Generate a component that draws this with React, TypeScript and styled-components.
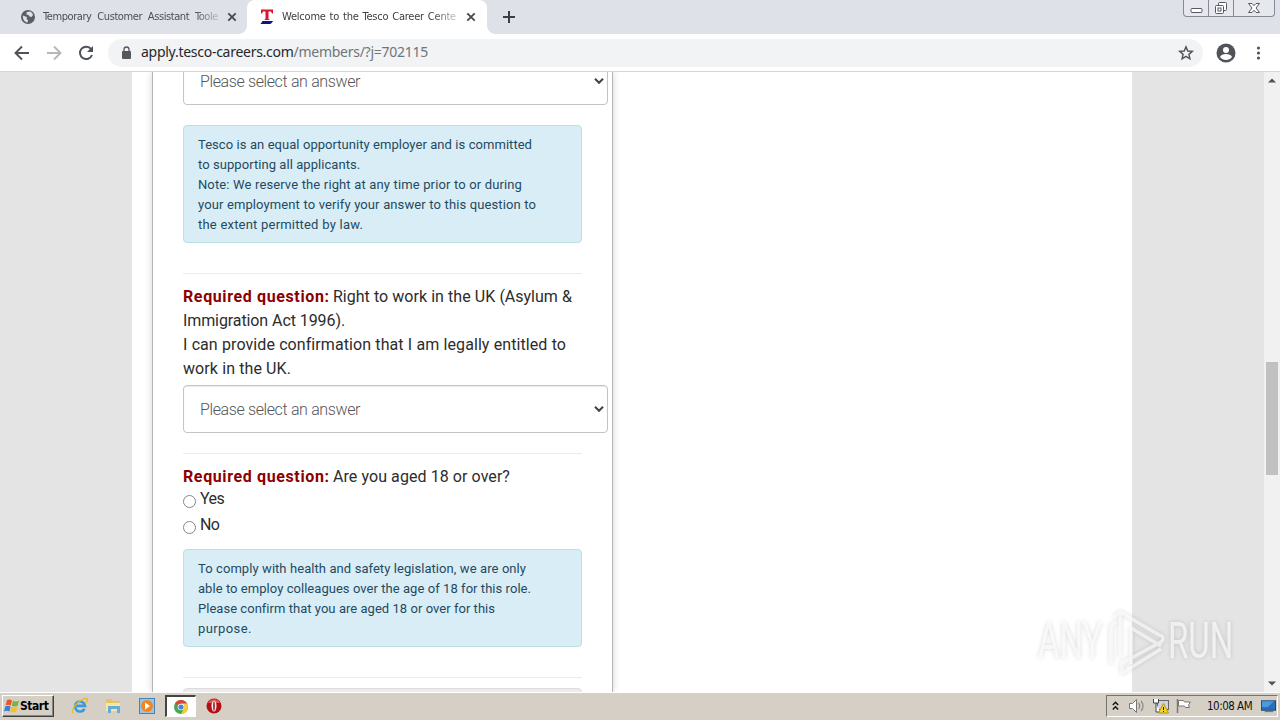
import React from "react";
import styled, { createGlobalStyle } from "styled-components";

const Global = createGlobalStyle`
  *{box-sizing:border-box}
  body{margin:0;background:#fff;overflow:hidden}
`;

const Screen = styled.div`
  width:1280px;height:720px;display:flex;flex-direction:column;overflow:hidden;position:relative;
  font-family:Roboto,"Liberation Sans",sans-serif;
`;

/* Text fitted to a fixed measure, spreading the word gaps */
const Line = styled.span<{ $w: number; $ls?: number }>`
  display:block;width:${p => p.$w}px;white-space:nowrap;text-align:justify;text-align-last:justify;
  letter-spacing:${p => p.$ls ?? 0}px;
`;

/* ---------- browser chrome ---------- */
const TabStrip = styled.header`
  flex:none;height:34px;background:#dee1e8;display:flex;
`;
const Tab = styled.div<{ $active?: boolean; $w: number; $pad: number }>`
  width:${p => p.$w}px;height:34px;display:flex;align-items:center;padding-left:${p => p.$pad}px;
  background:${p => (p.$active ? "#fff" : "transparent")};
  border-radius:8px 8px 0 0;color:${p => (p.$active ? "#3c4043" : "#4b4e53")};
  & > svg{flex:none}
`;
const TabTitle = styled.div<{ $gap: number }>`
  margin:0 8px 0 ${p => p.$gap}px;width:176px;height:20px;flex:none;
  font:11px/20px "DejaVu Sans Condensed","DejaVu Sans",sans-serif;
  mask-image:linear-gradient(90deg,#000 86%,rgba(0,0,0,.2));
`;
const Flare = styled.div<{ $side: "left" | "right" }>`
  width:8px;height:8px;align-self:flex-end;margin-${p => p.$side}:-8px;
  background:radial-gradient(circle at ${p => (p.$side === "left" ? "0" : "100%")} 0,transparent 7.5px,#fff 8px);
`;
const FlareLeft = styled(Flare)`margin-left:-8px;`;
const FlareRight = styled(Flare)`margin-right:0;`;
const NewTab = styled.div`margin-left:8px;height:34px;display:flex;align-items:center;`;
const WindowButtons = styled.div`
  margin:0 5px 0 auto;width:92px;height:17px;display:flex;border:1px solid #868a94;border-top:0;
  border-radius:0 0 4px 4px;background:#e6e8ee;
`;
const WinButton = styled.div<{ $w: number }>`
  width:${p => p.$w}px;display:flex;justify-content:center;border-right:1px solid #868a94;
  &:last-child{border:0}
`;
const Toolbar = styled.div`
  flex:none;height:38px;border-bottom:1px solid #d5d6d8;background:#fff;display:flex;align-items:center;
  padding:0 14px;
  & > svg{flex:none}
`;
const Address = styled.div`
  flex:none;width:1095px;height:28px;border-radius:14px;background:#f1f3f4;display:flex;align-items:center;
  margin:0 13px 0 14px;padding:0 8px 0 13px;
`;
const Url = styled.div`
  margin-left:9px;flex:1;font:14px/20px "Noto Sans",sans-serif;color:#70757a;letter-spacing:-.27px;padding-bottom:2px;
  b{font-weight:400;color:#26282c}
`;

/* ---------- page ---------- */
const Viewport = styled.main`flex:none;height:620px;display:flex;background:#e4e4e4;overflow:hidden;`;
const Page = styled.div`margin-left:132px;width:1000px;background:#fff;padding-left:20px;`;
const Panel = styled.section`
  width:461px;height:620px;border:solid #b4b4b4;border-width:0 1px;padding:0 30px;
  box-shadow:0 0 7px rgba(0,0,0,.18);background:#fff;overflow:hidden;
`;
const Select = styled.div<{ $top: number }>`
  width:425px;height:48px;margin-top:${p => p.$top}px;border:1px solid #c4c4c4;border-radius:4px;
  display:flex;align-items:center;justify-content:space-between;padding:0 2px 0 16px;
  box-shadow:inset 0 1px 1px rgba(0,0,0,.08);color:#555;font-size:16px;font-weight:300;
`;
const Notice = styled.div<{ $top: number }>`
  width:399px;margin-top:${p => p.$top}px;padding:9px 14px 7px;border:1px solid #bce0e4;border-radius:4px;
  background:#d9edf7;color:#1f4a60;font-size:13px;line-height:20px;
`;
const Rule = styled.hr<{ $top: number }>`
  width:399px;height:1px;border:0;background:#ececec;margin:${p => p.$top}px 0 0;
`;
const Question = styled.div`
  padding-top:11px;font-size:16px;line-height:24px;color:#2c2c2c;
`;
const QuestionRow = styled.div`display:flex;gap:4px;`;
const Required = styled.strong`
  width:146px;white-space:nowrap;color:#8b0000;font-weight:700;text-align-last:justify;letter-spacing:.62px;
`;
const Option = styled.label<{ $h: number }>`
  height:${p => p.$h}px;display:flex;gap:4px;font-size:16px;line-height:20px;color:#2c2c2c;letter-spacing:-.6px;
`;
const Radio = styled.i`
  width:13px;height:13px;border:1px solid #858585;border-radius:50%;background:#fff;margin-top:6px;
`;
const NextField = styled.div`margin-top:10px;width:399px;height:20px;background:#ececec;border:1px solid #ddd;border-radius:4px;`;

const Scrollbar = styled.div`
  width:16px;margin-left:auto;background:#f1f1f1;display:flex;flex-direction:column;align-items:center;
`;
const Arrow = styled.div<{ $down?: boolean }>`
  height:17px;display:flex;align-items:center;transform:${p => (p.$down ? "rotate(180deg)" : "none")};
`;
const Thumb = styled.div`width:12px;height:113px;margin:273px 0 200px;background:#c1c1c1;`;

/* ---------- taskbar ---------- */
const Taskbar = styled.footer`
  flex:none;height:28px;background:#d6cfc5;box-shadow:inset 0 1px #fff;
  display:flex;align-items:center;padding:3px 2px;
`;
const Start = styled.div`
  width:52px;height:22px;display:flex;align-items:center;padding-left:1px;background:#d6cfc5;
  border:1px solid;border-color:#fff #404040 #404040 #fff;box-shadow:inset -1px -1px #8a867e;
  font:bold 12px "DejaVu Sans Condensed",sans-serif;letter-spacing:-.45px;color:#000;
`;
const Launch = styled.div<{ $ml: number; $on?: boolean }>`
  width:${p => (p.$on ? 31 : 18)}px;height:22px;margin-left:${p => p.$ml}px;display:flex;align-items:center;justify-content:center;
  background:${p => (p.$on ? "#fff" : "none")};
  border:${p => (p.$on ? "solid" : "none")};border-width:2px 1px 1px 2px;border-color:#444 #fff #fff #444;
`;
const Tray = styled.div`
  margin-left:auto;width:172px;height:22px;display:flex;align-items:center;
  border:1px solid;border-color:#77736b #fff #fff #77736b;padding-left:5px;
  & > svg{flex:none}
`;
const Clock = styled.div`
  width:46px;margin:0 8px 0 14px;font:11.5px "DejaVu Sans Condensed",sans-serif;letter-spacing:-.5px;white-space:nowrap;color:#111;
`;
const Watermark = styled.svg`
  position:absolute;left:1030px;top:604px;filter:drop-shadow(0 0 2px rgba(0,0,0,.22));
`;

const Cross = () => (
  <svg width="10" height="10" viewBox="0 0 10 10"><path d="M1.300 1.300l7.400 7.400M8.700 1.300L1.300 8.700" stroke="#45484c" strokeWidth="1.800" /></svg>
);
const Chevron = () => (
  <svg width="12" height="8" viewBox="0 0 12 8"><path d="M2 1.8l4 4 4-4" fill="none" stroke="#444" strokeWidth="2" /></svg>
);
const Triangle = () => (
  <svg width="8" height="5" viewBox="0 0 8 5"><path d="M0 4.5L4 .5l4 4z" fill="#505050" /></svg>
);

export default function App() {
  return (
    <Screen>
      <Global />
      <TabStrip>
        <Tab $w={247} $pad={21}>
          <svg width="14" height="14" viewBox="0 0 14 14">
            <circle cx="7" cy="7" r="7" fill="#5b5f64" />
            <path d="M2 5.5c1.5.5 2.5 1.200 4 1.500l-.5 2 1.500 1 -.5 2.400C3.500 12 1.500 9.500 2 5.500zM6 2l3-.4c1.500.6 2.600 1.800 3 3.400l-1.500 2-2-.5-1-1.500-2-.5L5.500 3z" fill="#dee1e8" />
          </svg>
          <TabTitle $gap={8}><Line $w={175} $ls={-0.42}>Temporary Customer Assistant Toole</Line></TabTitle>
          <Cross />
        </Tab>
        <FlareLeft $side="left" />
        <Tab $active $w={240} $pad={12}>
          <svg width="16" height="16" viewBox="0 0 16 16">
            <path d="M2 .5h12v4h-1l-1-2H9.500V10l1.500 1H5l1.500-1V2.500H4l-1 2H2z" fill="#dc1530" />
            <path d="M3.500 12H14c-1.500 2.200-2 3-3 3H1c1 0 1.500-1.500 2.500-3z" fill="#10157e" />
          </svg>
          <TabTitle $gap={7}><Line $w={174} $ls={-0.22}>Welcome to the Tesco Career Cente</Line></TabTitle>
          <Cross />
        </Tab>
        <FlareRight $side="right" />
        <NewTab>
          <svg width="12" height="12" viewBox="0 0 12 12"><path d="M6 0v12M0 6h12" stroke="#3c4043" strokeWidth="2" /></svg>
        </NewTab>
        <WindowButtons>
          <WinButton $w={25}><svg width="15" height="16" viewBox="0 0 15 16"><rect x="2" y="8.500" width="11" height="4" rx="1" fill="#fff" stroke="#535866" /></svg></WinButton>
          <WinButton $w={25}>
            <svg width="14" height="16" viewBox="0 0 14 16"><g fill="#fff" stroke="#535866"><rect x="4.500" y="2.500" width="8" height="8" rx="1" /><rect x="1.500" y="5.500" width="8" height="8" rx="1" /><rect x="4" y="8" width="3" height="3" /></g></svg>
          </WinButton>
          <WinButton $w={40}>
            <svg width="14" height="16" viewBox="0 0 14 16"><path d="M1.500 3.500h3.500l2 2.200 2-2.200h3.500L9 8l3.500 4.500H9l-2-2.200-2 2.200H1.500L5 8z" fill="#fff" stroke="#535866" /></svg>
          </WinButton>
        </WindowButtons>
      </TabStrip>
      <Toolbar>
        <svg width="16" height="16" viewBox="0 0 16 16"><path d="M15 8H2M8 1.500L1.500 8 8 14.500" fill="none" stroke="#4f5357" strokeWidth="1.9" /></svg>
        <svg width="48" height="16" viewBox="0 0 48 16"><path d="M17 8h13M24 1.500L30.500 8 24 14.500" fill="none" stroke="#b5b7ba" strokeWidth="1.9" /></svg>
        <svg width="16" height="16" viewBox="0 0 16 16"><path d="M13.200 4.200A6.200 6.200 0 1 0 14 10" fill="none" stroke="#4f5357" strokeWidth="2" /><path d="M15 1v6H9z" fill="#4f5357" /></svg>
        <Address>
          <svg width="11" height="14" viewBox="0 0 11 14"><rect x="1" y="5" width="9" height="8" rx="1" fill="#55595d" /><path d="M3 5.500V3.500a2.500 2.500 0 0 1 5 0v2" fill="none" stroke="#55595d" strokeWidth="1.300" /></svg>
          <Url><b>apply.tesco-careers.com</b>/members/?j=702115</Url>
          <svg width="18" height="18" viewBox="0 0 24 24"><path d="M12 3.800l2.400 5.500 6 .5-4.500 4 1.300 5.900L12 16.600l-5.200 3.100 1.300-5.900-4.500-4 6-.5z" fill="none" stroke="#505458" strokeWidth="1.900" /></svg>
        </Address>
        <svg width="20" height="20" viewBox="0 0 20 20"><circle cx="10" cy="10" r="9.500" fill="#505458" /><circle cx="10" cy="7" r="3" fill="#fff" /><path d="M4 14c1-4 11-4 12 0-2.500 4-9.500 4-12 0z" fill="#fff" /></svg>
        <svg width="30" height="16" viewBox="0 0 30 16"><g fill="#505458"><circle cx="22.500" cy="3" r="1.600" /><circle cx="22.500" cy="8" r="1.600" /><circle cx="22.500" cy="13" r="1.600" /></g></svg>
      </Toolbar>

      <Viewport>
        <Page>
          <Panel>
            <Select $top={-15}><Line $w={160} $ls={-0.4}>Please select an answer</Line><Chevron /></Select>
            <Notice $top={20}>
              <Line $w={334} $ls={0.04}>Tesco is an equal opportunity employer and is committed</Line>
              <Line $w={162} $ls={0.06}>to supporting all applicants.</Line>
              <Line $w={324} $ls={0.1}>Note: We reserve the right at any time prior to or during</Line>
              <Line $w={338} $ls={0.1}>your employment to verify your answer to this question to</Line>
              <Line $w={165} $ls={0.18}>the extent permitted by law.</Line>
            </Notice>
            <Rule $top={30} />
            <Question>
              <QuestionRow><Required>Required question:</Required><Line $w={239} $ls={0}>Right to work in the UK (Asylum &amp;</Line></QuestionRow>
              <Line $w={162} $ls={-0.1}>Immigration Act 1996).</Line>
              <Line $w={383} $ls={0.08}>I can provide confirmation that I am legally entitled to</Line>
              <Line $w={108} $ls={0.1}>work in the UK.</Line>
            </Question>
            <Select $top={4}><Line $w={160} $ls={-0.4}>Please select an answer</Line><Chevron /></Select>
            <Rule $top={20} />
            <Question>
              <QuestionRow><Required>Required question:</Required><Line $w={177} $ls={0.06}>Are you aged 18 or over?</Line></QuestionRow>
            </Question>
            <Option $h={26}><Radio />Yes</Option>
            <Option $h={34}><Radio />No</Option>
            <Notice $top={0}>
              <Line $w={328} $ls={0.04}>To comply with health and safety legislation, we are only</Line>
              <Line $w={333} $ls={0.04}>able to employ colleagues over the age of 18 for this role.</Line>
              <Line $w={297} $ls={0.02}>Please confirm that you are aged 18 or over for this</Line>
              <Line $w={53} $ls={0.4}>purpose.</Line>
            </Notice>
            <Rule $top={30} />
            <NextField />
          </Panel>
        </Page>
        <Scrollbar><Arrow><Triangle /></Arrow><Thumb /><Arrow $down><Triangle /></Arrow></Scrollbar>
      </Viewport>

      <Taskbar>
        <Start>
          <svg width="16" height="16" viewBox="0 0 16 16"><path d="M3 2c2-1 3.500-.6 5 .3L6.800 7.400C5.200 6.600 3.500 6.500 1.700 7.300z" fill="#e8562a" /><path d="M9 2.800c2 1 4 .9 6-.2l-1.300 5.200c-2 1-4 .8-5.900-.1z" fill="#7bb342" /><path d="M1.400 8.300c1.800-.8 3.500-.7 5.200.1l-1.200 5C3.700 12.500 2 12.500 0 13.400z" fill="#3c7fd0" /><path d="M7.600 8.800c1.900 1 3.900 1 5.900 0l-1.300 5c-2 1-4 1-5.900 0z" fill="#f5be2a" /></svg>
          Start
        </Start>
        <Launch $ml={17}>
          <svg width="18" height="18" viewBox="0 0 18 18"><path d="M13.500 11.800A5 5 0 1 1 14 8.900H5" fill="none" stroke="#3b9ad9" strokeWidth="2.600" /><path d="M2 16C-1 13 8 3 14 1.500c4-.8 2 3 1 4.500" fill="none" stroke="#e5b92c" strokeWidth="1.300" /></svg>
        </Launch>
        <Launch $ml={15}>
          <svg width="16" height="16" viewBox="0 0 16 16"><path d="M1 1h6l1 2h7v10H1z" fill="#e6c566" /><path d="M1 5h14v8H1z" fill="#f7e5a0" /><path d="M3 8h12v7h-3v-4H6v4H3z" fill="#65acd8" /></svg>
        </Launch>
        <Launch $ml={16}>
          <svg width="16" height="16" viewBox="0 0 16 16"><rect x=".5" y=".5" width="15" height="15" fill="#9bc5e8" stroke="#4384b8" /><circle cx="8" cy="8" r="6" fill="#f0861d" /><path d="M6 4.500l5 3.500-5 3.500z" fill="#fff" /></svg>
        </Launch>
        <Launch $ml={9} $on>
          <svg width="14" height="14" viewBox="0 0 14 14"><circle cx="7" cy="7" r="7" fill="#44a852" /><path d="M7 7L.94 3.500A7 7 0 0 1 13.060 3.500z" fill="#e04435" /><path d="M7 3.500h6.060A7 7 0 0 1 7 14l3-5.500z" fill="#f8cb38" /><circle cx="7" cy="7" r="3.300" fill="#fff" /><circle cx="7" cy="7" r="2.600" fill="#4285dd" /></svg>
        </Launch>
        <Launch $ml={9}>
          <svg width="16" height="16" viewBox="0 0 16 16"><circle cx="8" cy="8" r="7.500" fill="#b50f16" /><path d="M2 5a6.700 6.700 0 0 1 12 0z" fill="#df5555" /><ellipse cx="8" cy="8" rx="2.500" ry="5.500" fill="#f7eaea" /><ellipse cx="8" cy="8" rx=".8" ry="4.700" fill="#8e1115" /></svg>
        </Launch>
        <Tray>
          <svg width="7" height="10" viewBox="0 0 7 10"><path d="M.8 4l2.700-2.700L6.200 4M.8 8.500l2.700-2.700 2.700 2.700" fill="none" stroke="#111" strokeWidth="1.400" /></svg>
          <svg width="33" height="16" viewBox="0 0 33 16"><path d="M10.500 5.500h3l4-4v13l-4-4h-3z" fill="#fff" stroke="#777" /><path d="M19.500 5c1.500 1.800 1.500 4.200 0 6M22 3c2.500 3 2.500 7 0 10" fill="none" stroke="#8b8985" strokeWidth="1.200" /></svg>
          <svg width="18" height="16" viewBox="0 0 18 16"><rect x="5.500" y="2.500" width="11" height="9" fill="#cfd4dc" stroke="#666" /><path d="M1.500 1v4h5V1M4 5v9h4" fill="#fff" stroke="#444" /><path d="M11.500 5.500l5 9.500h-10z" fill="#f7d529" stroke="#b1951a" /><path d="M11.500 9v3M11.500 13v1" stroke="#222" /></svg>
          <svg width="23" height="16" viewBox="0 0 23 16"><path d="M7.500 1v14" stroke="#777" strokeWidth="1.500" /><path d="M8.500 2.500h5l1 1.500h6l-2 3 1 2.500h-4l-1-1.500h-6z" fill="#fff" stroke="#777" /></svg>
          <Clock>10:08 AM</Clock>
          <svg width="15" height="14" viewBox="0 0 16 14"><rect x=".5" y="1.500" width="15" height="10" fill="#2870bd" stroke="#174777" /><path d="M1 2h13L7 8H1z" fill="#4c9ade" /><path d="M4 13h9" stroke="#5e6570" /></svg>
        </Tray>
      </Taskbar>

      <Watermark width="215" height="74" viewBox="0 0 215 74" fill="none">
        <g fill="#fff" fillOpacity=".68" fontFamily="Roboto" fontSize="50" fontWeight="400">
          <text x="0" y="0" transform="translate(8 54) scale(.66 1)">ANY</text>
          <text x="0" y="0" transform="translate(138 54) scale(.66 1)">RUN</text>
        </g>
        <path d="M81 60V22l5-4M90 53V8l41 24M90 8l-6 5M101 60V24l30 18M131 31q4 4 0 7L92 59v10l39-24" stroke="#fff" strokeOpacity=".62" strokeWidth="3.500" strokeLinejoin="round" />
      </Watermark>
    </Screen>
  );
}
